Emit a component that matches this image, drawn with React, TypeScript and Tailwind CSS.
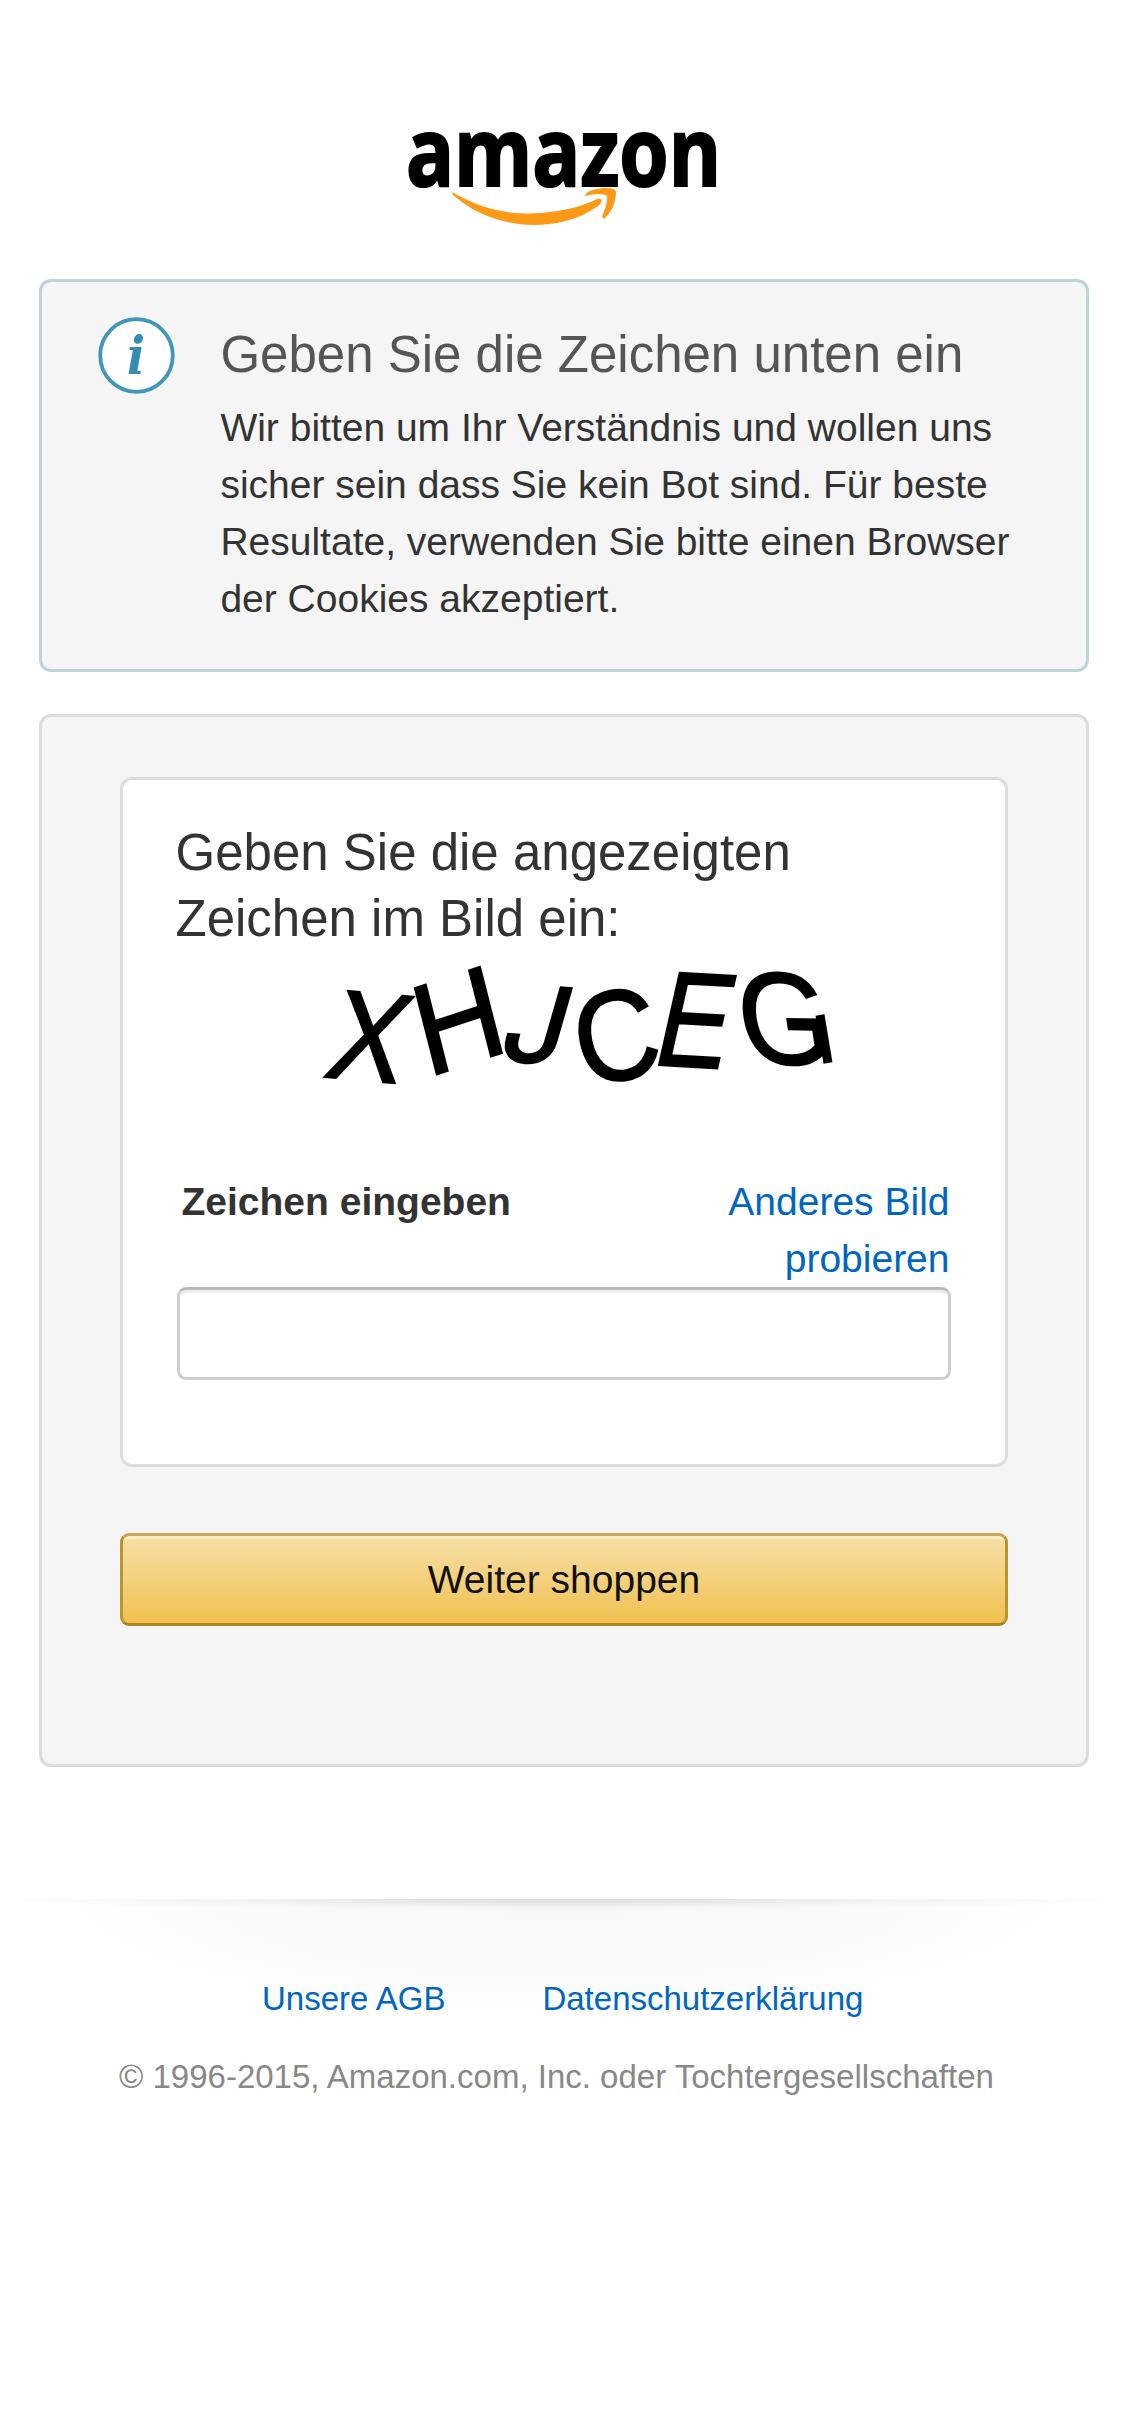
import { useState } from "react";

function AmazonLogo() {
  return (
    <svg className="mt-[132px] h-[93px] w-[309px] overflow-visible" viewBox="408 132 309 93" role="img" aria-label="amazon">
      <text
        x="406"
        y="185.5"
        textLength="315"
        lengthAdjust="spacingAndGlyphs"
        fontFamily="'Open Sans', sans-serif"
        fontWeight="700"
        fontSize="95"
        fill="#000"
        stroke="#000"
        strokeWidth="2.2"
      >
        amazon
      </text>
      <path
        d="M452 192 C485 211 512 215 541 213 C564 211 584 206 597 199 C604 198 602 203 598 206 C579 220 555 225 533 225 C501 224 475 214 453 195 Z"
        fill="#ff9a17"
      />
      <path
        d="M585 195 C588 190 598 188 607 188 Q616 188 616 192 C616 203 611 213 604 219 L602 217 C605 209 608 201 607 196 C602 193 593 194 585 196 Z"
        fill="#ff9a17"
      />
    </svg>
  );
}

function InfoIcon() {
  return (
    <svg className="mt-[35px] ml-14 h-[78px] w-[78px] shrink-0" viewBox="0 0 78 78" aria-hidden="true">
      <circle cx="38.5" cy="38.5" r="36.3" fill="#fff" stroke="#4296b8" strokeWidth="3.8" />
      <text
        x="38"
        y="57"
        textAnchor="middle"
        fontFamily="'DejaVu Serif', serif"
        fontStyle="italic"
        fontWeight="700"
        fontSize="53"
        textLength="18"
        lengthAdjust="spacingAndGlyphs"
        fill="#338cb2"
      >
        i
      </text>
    </svg>
  );
}

const LETTERS = [
  { char: "X", transform: "translate(370 1036) matrix(1.13 .1 -.312 1.254 0 0) translate(-33.2 34.4)" },
  { char: "H", transform: "translate(458.3 1019.5) matrix(1.165 -.383 .318 1.252 0 0) translate(-36.1 34.4)" },
  { char: "C", transform: "translate(616.5 1035) matrix(1.14 -.22 .25 1.26 0 0) translate(-36.5 34.4)" },
  { char: "E", transform: "translate(698.2 1019.5) matrix(1.08 .06 -.3 1.34 0 0) translate(-35 34.4)" },
  { char: "G", transform: "translate(783.5 1018) matrix(1.18 .02 .2 1.31 0 0) translate(-38 34.4)" },
];

function CharacterImage() {
  return (
    <svg className="ml-[114px] h-[210px] w-[600px] overflow-visible" viewBox="291 951 600 210">
      {LETTERS.map(({ char, transform }) => (
        <text
          key={char}
          transform={transform}
          fontFamily="'Liberation Sans', sans-serif"
          fontSize="100"
          fill="#000"
          stroke="#000"
          strokeWidth="1.6"
        >
          {char}
        </text>
      ))}
      <text
        transform="translate(536 1023) matrix(1.12 .1 -.3 1.04 0 0) translate(-26.5 36.4)"
        fontFamily="Inter, sans-serif"
        fontSize="100"
        fill="#000"
        stroke="#000"
        strokeWidth="2.4"
      >
        J
      </text>
      <path d="M820 1014 L828 1062" stroke="#000" strokeWidth="9" />
    </svg>
  );
}

export default function App() {
  const [value, setValue] = useState("");
  return (
    <main className="flex h-[2436px] w-[1125px] flex-col overflow-hidden bg-white font-['Liberation_Sans',sans-serif] text-[39px] leading-[57px] text-[#333]">
      <header className="flex h-[279px] shrink-0 justify-center">
        <AmazonLogo />
      </header>

      <section className="mr-9 ml-[39px] flex h-[393px] shrink-0 rounded-[12px] border-[3px] border-[#bcd3dc] bg-[#f5f5f5]">
        <InfoIcon />
        <div className="ml-[44.4px] pt-[40px]">
          <h4 className="text-[51px] leading-[66px] whitespace-nowrap text-[#555]">Geben Sie die Zeichen unten ein</h4>
          <p className="mt-[11px] w-[801px]">
            Wir bitten um Ihr Verständnis und wollen uns sicher sein dass Sie kein Bot sind. Für beste Resultate,
            verwenden Sie bitte einen Browser der Cookies akzeptiert.
          </p>
        </div>
      </section>

      <form
        className="mt-[42px] mr-9 ml-[39px] flex h-[1053px] shrink-0 flex-col rounded-[12px] border-[3px] border-[#ddd] bg-[#f5f5f5] px-[78px] pt-[60px]"
        onSubmit={(e) => e.preventDefault()}
      >
        <div className="flex h-[690px] flex-col rounded-[12px] border-[3px] border-[#ddd] bg-white px-[54px] pt-10">
          <h4 className="-ml-[1.5px] w-[700px] text-[51px] leading-[66px]">
            Geben Sie die angezeigten Zeichen im Bild ein:
          </h4>
          <CharacterImage />
          <div className="mt-[11px] flex justify-between pr-[1.5px] pl-[4.5px]">
            <label htmlFor="characters" className="font-bold">
              Zeichen eingeben
            </label>
            <a href="#" className="w-[300px] text-right text-[#0066c0]">
              Anderes Bild probieren
            </a>
          </div>
          <input
            id="characters"
            value={value}
            onChange={(e) => setValue(e.target.value)}
            autoComplete="off"
            className="h-[93px] w-[774px] rounded-[9px] border-[3px] border-[#cfcfcf] border-t-[#b9b9b9] bg-white px-5 shadow-[inset_0_3px_0_#eeeeee] outline-none"
          />
        </div>
        <button
          type="submit"
          className="mt-[66px] h-[93px] w-[888px] rounded-[9px] border-[3px] border-[#b9952f] border-t-[#c7a75c] border-b-[#a88526] bg-linear-to-b from-[#f7dfa5] to-[#f0c14b] text-[#111] shadow-[inset_0_3px_0_#fcecc4]"
        >
          Weiter shoppen
        </button>
      </form>

      <footer className="mt-[132px] flex h-[537px] flex-col bg-[radial-gradient(ellipse_50%_12px_at_50%_0,#dadada_0%,rgba(225,225,225,0.3)_60%,transparent_100%),radial-gradient(ellipse_52%_132px_at_50%_0,#f7f7f7_0%,#fff_100%)] text-[33px] leading-[45px]">
        <nav className="mt-[77px] flex gap-[97px] pl-[262px] text-[#0066c0]">
          <a href="#">Unsere AGB</a>
          <a href="#">Datenschutzerklärung</a>
        </nav>
        <p className="mt-[33px] pl-[119px] text-[#888]">© 1996-2015, Amazon.com, Inc. oder Tochtergesellschaften</p>
      </footer>
    </main>
  );
}
